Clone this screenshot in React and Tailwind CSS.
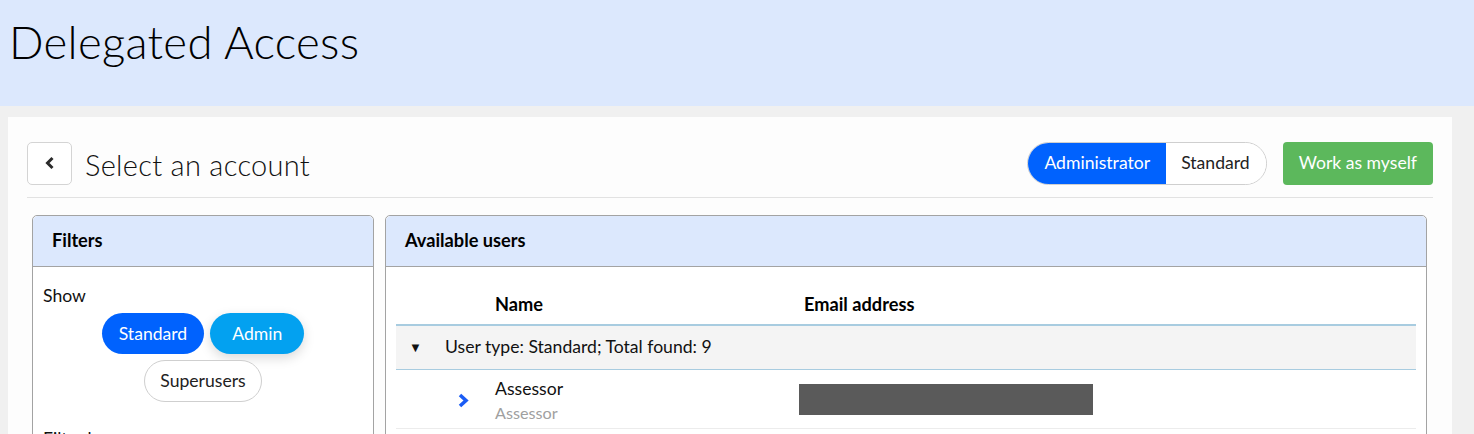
import React from "react";

const lato = { fontFamily: "Lato, 'Open Sans', sans-serif" };

function ChevronLeft() {
  return (
    <svg width="10" height="14" viewBox="0 0 10 14">
      <polyline
        points="7.5,2 2.5,7 7.5,12"
        fill="none"
        stroke="#2b2b2b"
        strokeWidth="3"
        strokeLinejoin="miter"
      />
    </svg>
  );
}

function ChevronRight() {
  return (
    <svg width="13" height="15" viewBox="0 0 13 15">
      <polyline
        points="3,2 9,7.5 3,13"
        fill="none"
        stroke="#1a5cf5"
        strokeWidth="3.6"
      />
    </svg>
  );
}

function Panel({ title, className, children }) {
  return (
    <div
      className={`border border-[#a3a3a3] rounded-t-[5px] bg-white ${className}`}
    >
      <div className="h-[51px] bg-[#dce8fd] border-b border-[#a3a3a3] rounded-t-[5px] flex items-center px-[19px]">
        <span className="text-[18.2px] font-bold text-black">{title}</span>
      </div>
      {children}
    </div>
  );
}

export default function App() {
  const rows = [
    { name: "Assessor", role: "Assessor" },
    { name: "Learner One", role: "Learner" },
    { name: "Learner Two", role: "Learner" },
  ];

  return (
    <div className="h-[434px] overflow-hidden bg-[#f0f0f0]" style={lato}>
      {/* HEADER */}
      <div className="h-[106px] bg-[#dce8fd] pl-[9px] pt-[16px]">
        <h1 className="text-[45.5px] font-light text-black leading-[52px] tracking-[0.3px]">
          Delegated Access
        </h1>
      </div>

      {/* CARD */}
      <div className="pt-[11px] pl-[8px]">
        <div className="w-[1444px] bg-[#fdfdfd] pt-[25px] px-[19px] h-[400px]">
          <div className="flex items-center h-[42px]">
            <button className="w-[45px] h-[43px] border border-[#d4d4d4] rounded-[5px] bg-white flex items-center justify-center">
              <ChevronLeft />
            </button>
            <span className="ml-[13px] pt-[3px] text-[29px] font-light text-[#111] tracking-[0.3px]">
              Select an account
            </span>

            <div className="ml-auto flex items-center">
              <div className="flex h-[43px] rounded-full border border-[#cfcfcf] overflow-hidden">
                <div className="bg-[#0062fe] text-white text-[17.6px] flex items-center px-[16px]">
                  Administrator
                </div>
                <div className="bg-white text-[#222] text-[17.6px] flex items-center pl-[15px] pr-[16px]">
                  Standard
                </div>
              </div>
              <button className="ml-[16px] h-[43px] px-[16px] rounded-[4px] bg-[#5cb85c] text-white text-[17.6px]">
                Work as myself
              </button>
            </div>
          </div>

          <div className="mt-[13px] border-b border-[#e2e2e2]" />

          {/* PANELS */}
          <div className="mt-[17px] flex gap-[11px] pl-[5px] pr-[6px]">
            <Panel title="Filters" className="w-[342px]">
              <div className="pt-[16px] px-[10px]">
                <div className="text-[17.6px] text-[#111]">Show</div>
                <div className="flex flex-col items-center gap-[6px] mt-[4px]">
                  <div className="flex gap-[6px]">
                    <button className="h-[41px] px-[17px] rounded-full bg-[#0062fe] text-white text-[17.6px]">
                      Standard
                    </button>
                    <button className="h-[41px] px-[22px] rounded-full bg-[#03a1f0] text-white text-[17.6px] shadow-[0_4px_12px_rgba(0,0,0,0.15)]">
                      Admin
                    </button>
                  </div>
                  <button className="h-[42px] px-[15px] rounded-full bg-white border border-[#cfcfcf] text-[#222] text-[17.6px]">
                    Superusers
                  </button>
                </div>
                <div className="mt-[24px] text-[17.6px] text-[#111]">Filter by</div>
              </div>
            </Panel>

            <Panel title="Available users" className="flex-1">
              <div className="pt-[18px] px-[10px]">
                <div className="flex h-[41px] items-center border-b-2 border-[#a8cce0] text-[18.2px] font-bold text-black">
                  <div className="w-[99px]" />
                  <div className="w-[309px]">Name</div>
                  <div>Email address</div>
                </div>
                <div className="flex h-[44px] items-center bg-[#f4f4f4] border-b border-[#a8cce0] text-[17.6px] text-[#111]">
                  <span className="ml-[13px] w-[36px] text-[13px]">▼</span>
                  <span>User type: Standard; Total found: 9</span>
                </div>
                {rows.map((r, i) => (
                  <div
                    key={i}
                    className="flex h-[59px] items-center border-b border-[#ececec]"
                  >
                    <div className="w-[99px] flex justify-end pr-[25px] pt-[3px]">
                      <ChevronRight />
                    </div>
                    <div className="w-[304px] leading-[24px] pt-[3px]">
                      <div className="text-[17.6px] text-[#111]">{r.name}</div>
                      <div className="text-[16.2px] text-[#a0a0a0]">{r.role}</div>
                    </div>
                    <div className="w-[294px] h-[31px] bg-[#5a5a5a]" />
                  </div>
                ))}
              </div>
            </Panel>
          </div>
        </div>
      </div>
    </div>
  );
}
